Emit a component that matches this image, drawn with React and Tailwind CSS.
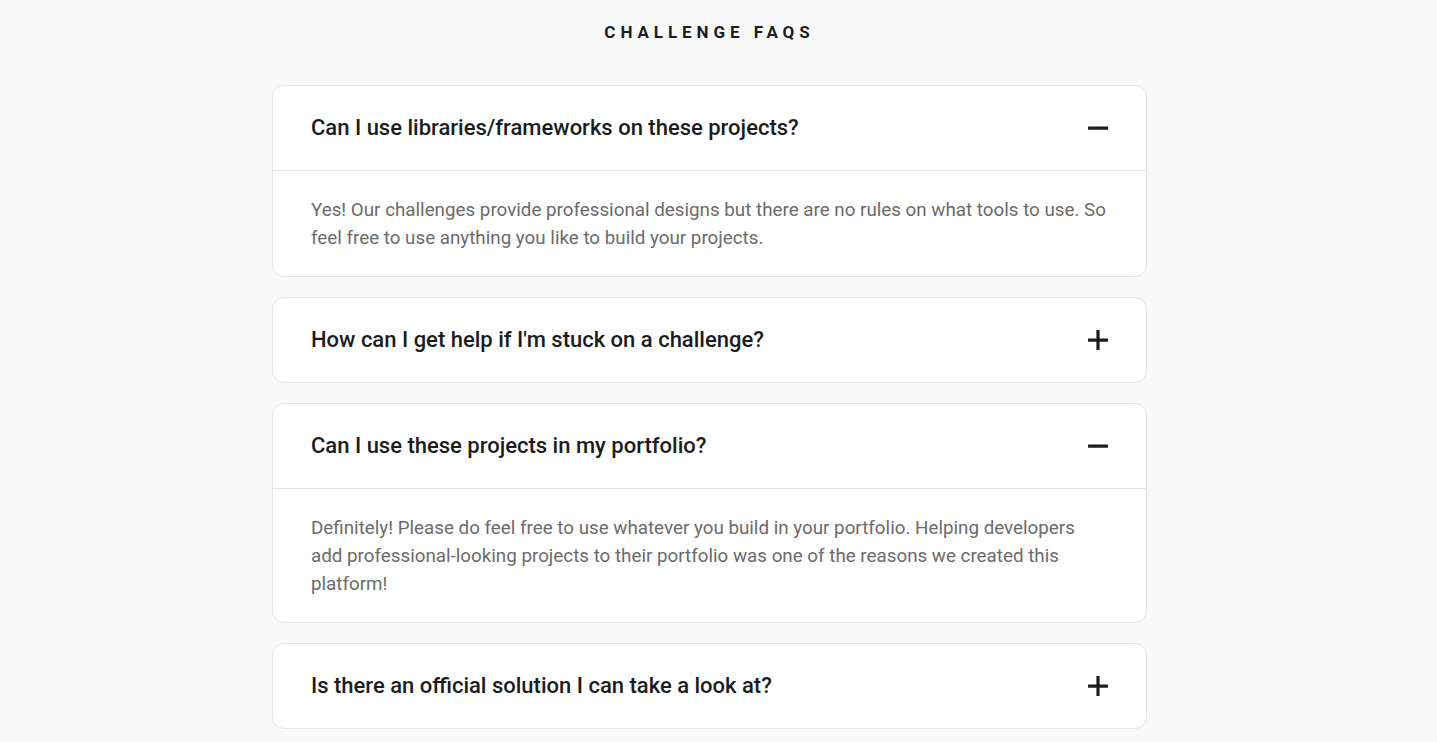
import { useState } from 'react';

const FAQS = [
  {
    q: 'Can I use libraries/frameworks on these projects?',
    a: 'Yes! Our challenges provide professional designs but there are no rules on what tools to use. So feel free to use anything you like to build your projects.',
    open: true,
  },
  {
    q: "How can I get help if I'm stuck on a challenge?",
    a: 'Ask a question in our community Slack or post on the solution page. Someone will be happy to help you out.',
    open: false,
  },
  {
    q: 'Can I use these projects in my portfolio?',
    a: 'Definitely! Please do feel free to use whatever you build in your portfolio. Helping developers add professional-looking projects to their portfolio was one of the reasons we created this platform!',
    open: true,
  },
  {
    q: 'Is there an official solution I can take a look at?',
    a: "We don't provide official solutions. Browse community solutions to see how others approached it.",
    open: false,
  },
];

function ToggleIcon({ open }) {
  return (
    <svg width="20" height="20" viewBox="0 0 20 20" className="shrink-0">
      <rect x="0" y="8.5" width="20" height="3.2" rx="0.4" fill="#1b1c1e" />
      {!open && <rect x="8.4" y="0" width="3.2" height="20" rx="0.4" fill="#1b1c1e" />}
    </svg>
  );
}

function FaqItem({ item, open, onToggle }) {
  return (
    <div className="bg-white border border-[#e3e5e6] rounded-xl">
      <button
        onClick={onToggle}
        className="w-full h-[84px] flex items-center justify-between px-[38px] text-left"
      >
        <span className="text-[22px] font-medium text-[#1b1c1e] font-['Roboto',sans-serif]">{item.q}</span>
        <ToggleIcon open={open} />
      </button>
      {open && (
        <div className="border-t border-[#e3e5e6] pl-[38px] pr-[37px] pt-[25px] pb-[24px]">
          <p className="text-[18.8px] leading-[28px] text-[#6b6b6b] font-['Roboto',sans-serif]">{item.a}</p>
        </div>
      )}
    </div>
  );
}

export default function App() {
  const [openState, setOpenState] = useState(FAQS.map(f => f.open));

  return (
    <div className="min-h-screen bg-[#f9f9f9] font-['Roboto',sans-serif]">
      <div className="w-[1419px] pt-[20px] pb-10">
        <h1 className="text-center text-[17px] font-bold tracking-[0.29em] text-[#1b1c1e]">CHALLENGE FAQS</h1>
        <div className="w-[875px] mx-auto mt-[39px] flex flex-col gap-5">
          {FAQS.map((item, i) => (
            <FaqItem
              key={item.q}
              item={item}
              open={openState[i]}
              onToggle={() => setOpenState(s => s.map((v, j) => (j === i ? !v : v)))}
            />
          ))}
        </div>
      </div>
    </div>
  );
}
